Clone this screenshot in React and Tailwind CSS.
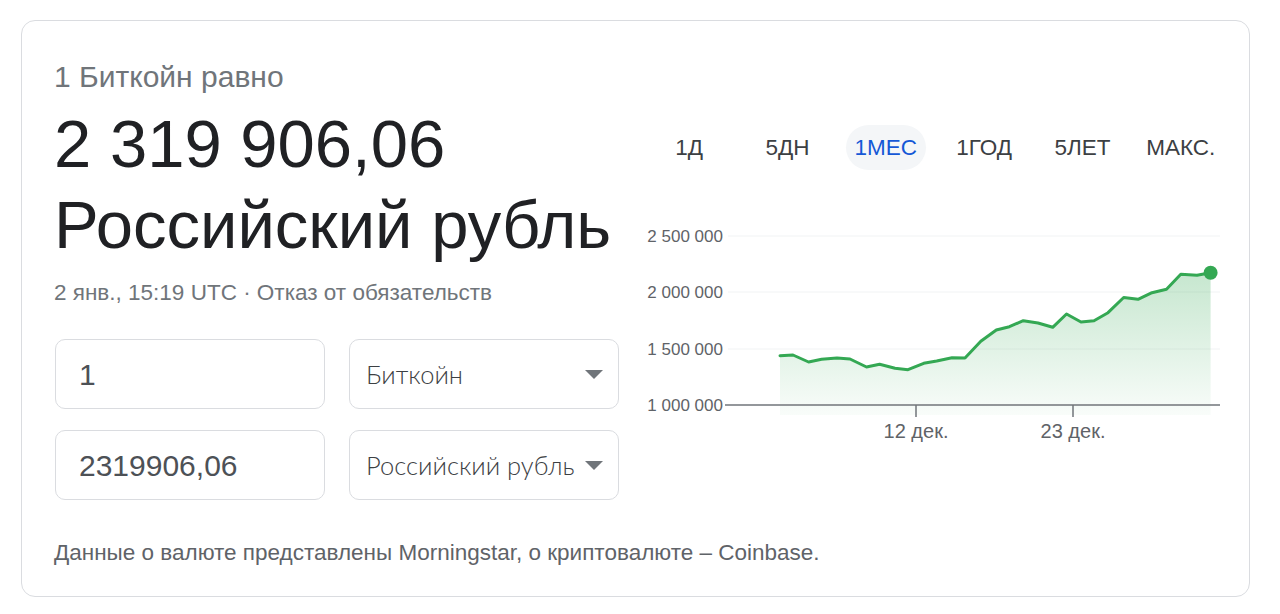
import { useState } from "react";

const tabs = ["1Д", "5ДН", "1МЕС", "1ГОД", "5ЛЕТ", "МАКС."];

// chart points, svg coords (origin = 640,200 on page)
const points = [
  [140, 155.7], [153, 155], [168.6, 162], [181.6, 159.3], [197, 158], [210, 159],
  [226.5, 167], [239.6, 164.3], [255, 168.3], [268, 169.7], [283.7, 163.3], [296.7, 161],
  [312, 157.7], [325, 158], [340.8, 141.3], [356.3, 130], [369.4, 126.7], [383.3, 120.7],
  [398, 123], [412.7, 127.3], [426.5, 114], [441, 122], [454, 120.7], [468, 112.7],
  [483.7, 97.5], [498, 99.3], [512, 92.7], [526.5, 89.3], [540.8, 74.3], [557, 75.3],
  [570.6, 72.7],
];

function Chart() {
  const line = points.map((p, i) => `${i ? "L" : "M"}${p[0]} ${p[1]}`).join(" ");
  const last = points[points.length - 1];
  const area = `${line} L${last[0]} 215 L${points[0][0]} 215 Z`;
  const labels = [
    ["2 500 000", 36],
    ["2 000 000", 92],
    ["1 500 000", 149],
    ["1 000 000", 205],
  ];

  return (
    <svg width="590" height="250" className="block" style={{ fontFamily: "'Liberation Sans', Arial, sans-serif" }}>
      <defs>
        <linearGradient id="fill" x1="0" y1="72" x2="0" y2="215" gradientUnits="userSpaceOnUse">
          <stop offset="0" stopColor="#34a853" stopOpacity="0.28" />
          <stop offset="1" stopColor="#34a853" stopOpacity="0.03" />
        </linearGradient>
      </defs>

      {/* grid */}
      {labels.slice(0, 3).map(([, y]) => (
        <line key={y} x1="88" x2="580" y1={y} y2={y} stroke="#f1f3f4" strokeWidth="1" />
      ))}

      <path d={area} fill="url(#fill)" />

      {/* axis */}
      <line x1="85" x2="580" y1="205" y2="205" stroke="#70757a" strokeWidth="1.5" />
      <line x1="276" x2="276" y1="205" y2="217" stroke="#70757a" strokeWidth="1.5" />
      <line x1="433" x2="433" y1="205" y2="217" stroke="#70757a" strokeWidth="1.5" />

      {labels.map(([t, y]) => (
        <text key={t} x="83" y={y + 6} textAnchor="end" fontSize="17" fill="#5f6368">
          {t}
        </text>
      ))}
      <text x="276" y="238" textAnchor="middle" fontSize="20" fill="#5f6368">12 дек.</text>
      <text x="433" y="238" textAnchor="middle" fontSize="20" fill="#5f6368">23 дек.</text>

      <path d={line} fill="none" stroke="#34a853" strokeWidth="3" strokeLinejoin="round" strokeLinecap="round" />
      <circle cx={last[0]} cy={last[1]} r="7" fill="#34a853" />
    </svg>
  );
}

function Caret() {
  return (
    <svg width="18" height="9" viewBox="0 0 18 9" className="shrink-0">
      <path d="M0 0 H18 L9 9 Z" fill="#70757a" />
    </svg>
  );
}

function Select({ label }) {
  return (
    <div className="flex h-[70px] w-[270px] items-center justify-between rounded-[10px] border border-[#dadce0] pl-[16px] pr-[15px]">
      <span className="text-[25.5px] font-light text-[#3c4043] whitespace-nowrap" style={{ fontFamily: "Lato, 'Liberation Sans', sans-serif" }}>
        {label}
      </span>
      <Caret />
    </div>
  );
}

export default function App() {
  const [active, setActive] = useState("1МЕС");

  return (
    <div className="min-h-screen bg-white pl-[21px] pt-[20px]" style={{ fontFamily: "'Liberation Sans', Arial, sans-serif" }}>
      <div className="flex h-[577px] w-[1229px] rounded-[14px] border border-[#dadce0]">
        {/* left */}
        <div className="flex w-[618px] flex-col pl-[32px] pt-[40px]">
          <div className="text-[30px] leading-[32px] text-[#70757a]">1 Биткойн равно</div>
          <div className="mt-[10px] text-[67px] leading-[81px] text-[#202124] whitespace-nowrap">
            <div>2 319 906,06</div>
            <div>Российский рубль</div>
          </div>
          <div className="mt-[15px] text-[22.5px] leading-[26px] text-[#70757a] whitespace-nowrap">
            2 янв., 15:19 UTC · Отказ от обязательств
          </div>

          <div className="mt-[33px] ml-[1px] grid grid-cols-[270px_270px] gap-x-[24px] gap-y-[21px]">
            <div className="flex h-[70px] items-center rounded-[10px] border border-[#dadce0] pl-[23px] text-[30px] text-[#4d5156]">1</div>
            <Select label="Биткойн" />
            <div className="flex h-[70px] items-center rounded-[10px] border border-[#dadce0] pl-[23px] text-[30px] text-[#4d5156]">2319906,06</div>
            <Select label="Российский рубль" />
          </div>

          <div className="mt-[40px] text-[22.5px] leading-[26px] text-[#5f6368] whitespace-nowrap">
            Данные о валюте представлены Morningstar, о криптовалюте – Coinbase.
          </div>
        </div>

        {/* right */}
        <div className="flex w-[590px] flex-col pt-[104px]">
          <div className="grid grid-cols-6">
            {tabs.map((t) => (
              <div key={t} className="flex justify-center">
                <button
                  onClick={() => setActive(t)}
                  className={`h-[45px] rounded-full px-[9px] text-[22.5px] ${
                    active === t ? "bg-[#f4f6f8] text-[#1558d6]" : "text-[#3c4043]"
                  }`}
                >
                  {t}
                </button>
              </div>
            ))}
          </div>
          <div className="mt-[30px]">
            <Chart />
          </div>
        </div>
      </div>
    </div>
  );
}
